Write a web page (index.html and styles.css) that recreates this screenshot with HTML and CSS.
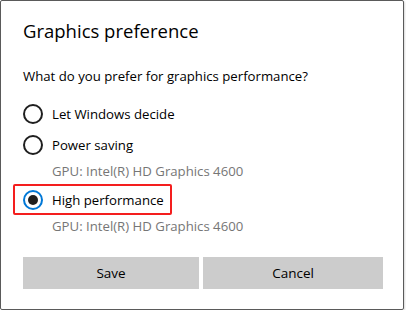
FILE: index.html
```html
<!DOCTYPE html>
<html lang="en">
<head>
    <meta charset="UTF-8">
    <meta name="viewport" content="width=device-width, initial-scale=1.0">
    <title>Graphics preference</title>
    <link rel="stylesheet" href="styles.css">
</head>
<body>
    <div class="dialog">
        <h1 class="title">Graphics preference</h1>
        <p class="question">What do you prefer for graphics performance?</p>
        <div class="options">
            <label class="option">
                <span class="radio"></span>
                <span>Let Windows decide</span>
            </label>
            <label class="option">
                <span class="radio"></span>
                <span>Power saving</span>
            </label>
            <p class="gpu">GPU: Intel(R) HD Graphics 4600</p>
            <label class="option checked">
                <span class="radio"></span>
                <span>High performance</span>
                <span class="highlight"></span>
            </label>
            <p class="gpu">GPU: Intel(R) HD Graphics 4600</p>
        </div>
        <div class="buttons">
            <button class="button">Save</button>
            <button class="button">Cancel</button>
        </div>
    </div>
</body>
</html>
```

FILE: styles.css
```css
body {
    margin: 0;
    background-color: #FFFFFF;
    font-family: "Open Sans", "Noto Sans", Arial, sans-serif;
    color: #000000;
}
.dialog {
    box-sizing: border-box;
    width: 404px;
    height: 310px;
    border: 1px solid #5A5A5A;
    border-radius: 2px;
    padding: 18px 20px 0 22px;
    box-shadow: 1px 1px 2px rgba(0, 0, 0, 0.15);
}
.title {
    margin: 0;
    font-size: 18.5px;
    font-weight: normal;
    line-height: 24px;
}
.question {
    margin: 23px 0 0;
    font-size: 13.2px;
    line-height: 20px;
}
.options {
    margin-top: 13px;
}
.option {
    position: relative;
    display: flex;
    align-items: center;
    height: 30px;
    margin-bottom: 1px;
    font-size: 13.2px;
}
.radio {
    box-sizing: border-box;
    width: 20px;
    height: 20px;
    margin-right: 9px;
    border: 2px solid #1F1F1F;
    border-radius: 50%;
    display: flex;
    align-items: center;
    justify-content: center;
}
.checked .radio {
    border-color: #0078D7;
}
.checked .radio::after {
    content: "";
    width: 10px;
    height: 10px;
    border-radius: 50%;
    background-color: #1F1F1F;
}
.gpu {
    margin: 0 0 4px 29px;
    font-size: 13.2px;
    line-height: 20px;
    color: #767676;
}
.highlight {
    position: absolute;
    left: -10px;
    top: -1px;
    width: 159px;
    height: 31px;
    box-sizing: border-box;
    border: 2.5px solid #F41E1E;
    border-radius: 2px;
}
.buttons {
    display: grid;
    grid-template-columns: 176px 180px;
    gap: 4px;
    margin-top: 21px;
}
.button {
    height: 32px;
    border: none;
    background-color: #CCCCCC;
    font-family: inherit;
    font-size: 13.5px;
    color: #000000;
    padding: 0;
}
```
